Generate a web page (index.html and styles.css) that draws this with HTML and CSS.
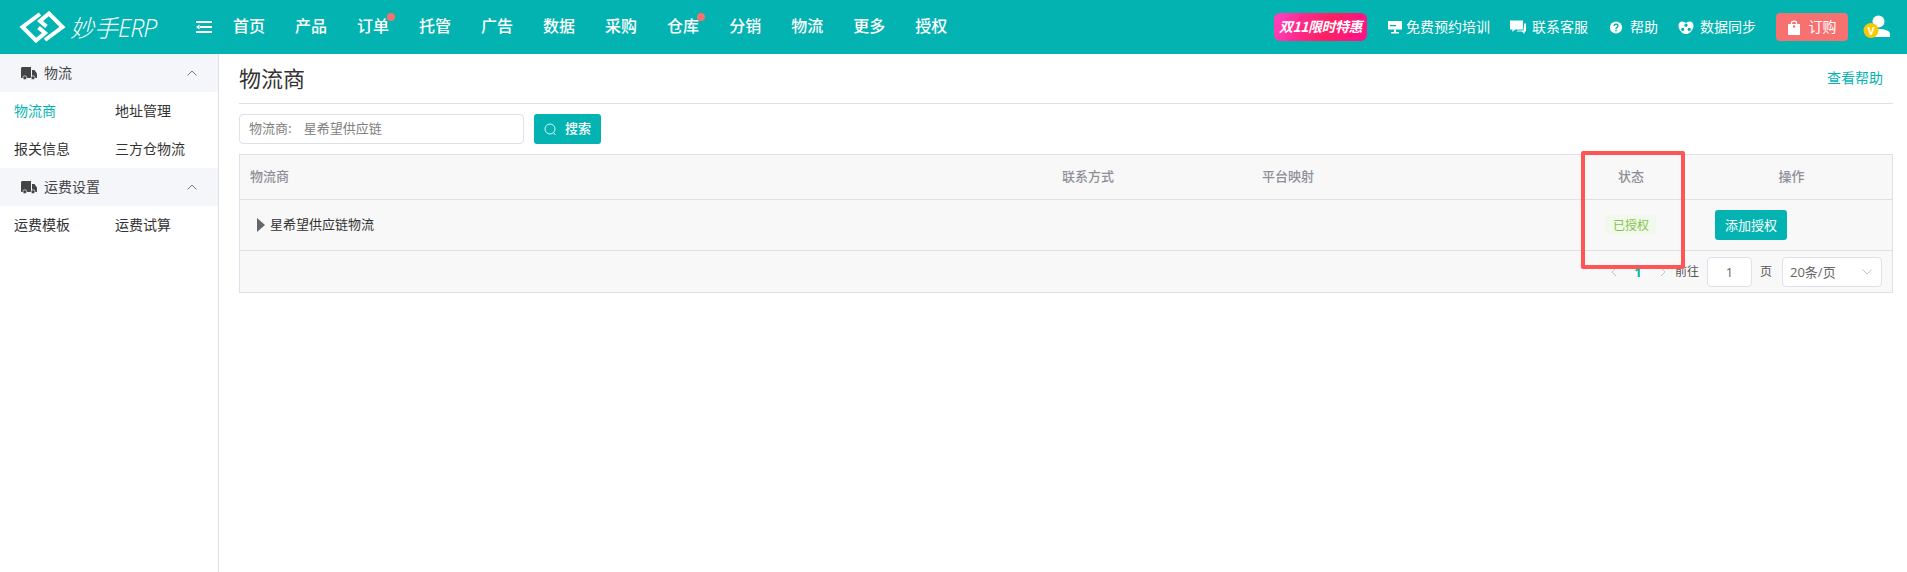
FILE: index.html
```html
<!DOCTYPE html>
<html lang="zh-CN">
<head>
<meta charset="utf-8">
<title>物流商</title>
<link rel="stylesheet" href="styles.css">
</head>
<body>
<header class="topbar">
  <div class="brand">
    <svg class="brand-mark" viewBox="0 0 47 32" fill="none" stroke="#fff" stroke-width="4">
      <path d="M21 3 3.500 16 17 29.500 26 22 19.500 16.500"/>
      <path d="M26 29 43.500 16 30 2.500 21 10 27.500 15.500"/>
    </svg>
    <span class="brand-name">妙手<span class="brand-latin">ERP</span></span>
  </div>
  <svg class="menu-toggle" viewBox="0 0 16 12" fill="#fff">
    <rect x="0" y="0" width="16" height="2"/>
    <rect x="4" y="5" width="12" height="2"/>
    <path d="M0 6 3.500 3.500V8.500Z"/>
    <rect x="0" y="10" width="16" height="2"/>
  </svg>
  <nav class="nav">
    <a class="nav-item">首页</a>
    <a class="nav-item">产品</a>
    <a class="nav-item has-dot">订单</a>
    <a class="nav-item">托管</a>
    <a class="nav-item">广告</a>
    <a class="nav-item">数据</a>
    <a class="nav-item">采购</a>
    <a class="nav-item has-dot">仓库</a>
    <a class="nav-item">分销</a>
    <a class="nav-item">物流</a>
    <a class="nav-item">更多</a>
    <a class="nav-item">授权</a>
  </nav>
  <div class="tools">
    <span class="promo">双11限时特惠</span>
    <a class="tool tool-first">
      <svg class="tool-icon-small" viewBox="0 0 14 14" fill="#fff"><path d="M0 1h14v8.500H0Z"/><path d="M6 9.500h2v2.500h3v1.500H3V12h3Z"/><rect x="2" y="5" width="6" height="1.300" fill="#03b3b2"/></svg>
      <span class="tool-label">免费预约培训</span>
    </a>
    <a class="tool">
      <svg class="tool-icon" viewBox="0 0 16 14" fill="#fff"><path d="M0 0h13v9H5L2.500 11.500V9H0Z"/><path d="M14.200 3H16v8h-1.500v2.500L12 11H6.500L7.500 10H13.500Z"/></svg>
      <span class="tool-label">联系客服</span>
    </a>
    <a class="tool">
      <svg class="tool-icon" viewBox="0 0 16 16"><circle cx="8" cy="8" r="6.500" fill="#fff"/><path d="M5.900 6.300C6 3.900 10.100 4 10.100 6.300 10.100 7.900 8 7.800 8 9.500" fill="none" stroke="#03b3b2" stroke-width="1.500"/><rect x="7.200" y="10.500" width="1.600" height="1.600" fill="#03b3b2"/></svg>
      <span class="tool-label">帮助</span>
    </a>
    <a class="tool">
      <svg class="tool-icon" viewBox="0 0 16 16"><path d="M4 1.500C5.600 1.500 7 2.300 8 3.200 9 2.300 10.400 1.500 12 1.500 14.500 1.500 16 3.700 16 6 16 10.500 11.500 15 8 15 4.500 15 0 10.500 0 6 0 3.700 1.500 1.500 4 1.500Z" fill="#fff"/><circle cx="8" cy="5.500" r="1.700" fill="#03b3b2"/><circle cx="4.500" cy="10" r="1.700" fill="#03b3b2"/><circle cx="11.500" cy="10" r="1.700" fill="#03b3b2"/></svg>
      <span class="tool-label">数据同步</span>
    </a>
    <a class="order-btn">
      <svg class="order-icon" viewBox="0 0 12 15"><path d="M0 4h12v11H0Z" fill="#fff"/><path d="M3.500 6V2.800C3.500 .6 8.500 .6 8.500 2.800V6" fill="none" stroke="#fff" stroke-width="1.300"/><circle cx="6" cy="6.500" r="1.200" fill="#f87171"/></svg>
      <span class="tool-label">订购</span>
    </a>
    <div class="user">
      <svg class="user-icon" viewBox="0 0 27 24"><circle cx="15.500" cy="6.500" r="6" fill="#fff"/><path d="M8 22V19C8 15 12 14 15.500 14 20 14 27 15 27 19V22Z" fill="#fff"/><circle cx="8" cy="15.500" r="7.500" fill="#fcc800"/></svg>
      <span class="vip">V</span>
    </div>
  </div>
</header>
<div class="shell">
  <aside class="sidebar">
    <div class="group-head">
      <svg class="truck" viewBox="0 0 16 13"><use href="#truck-shape"/></svg>
      <span class="group-title">物流</span>
      <svg class="chevron" viewBox="0 0 10 6"><path d="M.5 5.500 5 1 9.500 5.500"/></svg>
    </div>
    <div class="group-links">
      <a class="side-link is-active">物流商</a>
      <a class="side-link">地址管理</a>
      <a class="side-link">报关信息</a>
      <a class="side-link">三方仓物流</a>
    </div>
    <div class="group-head">
      <svg class="truck" viewBox="0 0 16 13"><use href="#truck-shape"/></svg>
      <span class="group-title">运费设置</span>
      <svg class="chevron" viewBox="0 0 10 6"><path d="M.5 5.500 5 1 9.500 5.500"/></svg>
    </div>
    <div class="group-links">
      <a class="side-link">运费模板</a>
      <a class="side-link">运费试算</a>
    </div>
  </aside>
  <main class="content">
    <div class="page-head">
      <h1 class="page-title">物流商</h1>
      <a class="help-link">查看帮助</a>
    </div>
    <div class="filters">
      <div class="field">
        <span class="field-label">物流商:</span>
        <span class="field-value">星希望供应链</span>
      </div>
      <button class="btn btn-search" type="button">
        <svg class="search-icon" viewBox="0 0 13 13"><circle cx="6" cy="6" r="5"/><path d="M9.500 9.800 11.500 12"/></svg>
        <span class="btn-label">搜索</span>
      </button>
    </div>
    <section class="table">
      <div class="row row-head">
        <div class="cell">物流商</div>
        <div class="cell">联系方式</div>
        <div class="cell">平台映射</div>
        <div class="cell cell-center">状态</div>
        <div class="cell cell-center">操作</div>
      </div>
      <div class="row row-body">
        <div class="cell cell-name"><span class="caret"></span><span class="name-text">星希望供应链物流</span></div>
        <div class="cell"></div>
        <div class="cell"></div>
        <div class="cell cell-center"><span class="tag">已授权</span></div>
        <div class="cell cell-action"><button class="btn btn-add" type="button">添加授权</button></div>
      </div>
      <div class="pager">
        <svg class="pager-arrow" viewBox="0 0 12 12"><path d="M8 2 4 6 8 10"/></svg>
        <span class="pager-num">1</span>
        <svg class="pager-arrow pager-next" viewBox="0 0 12 12"><path d="M4 2 8 6 4 10"/></svg>
        <span class="pager-text pager-goto">前往</span>
        <span class="pager-input">1</span>
        <span class="pager-text pager-unit">页</span>
        <div class="pager-select">
          <span>20条/页</span>
          <svg class="select-chevron" viewBox="0 0 10 6"><path d="M.5 .5 5 5 9.500 .5"/></svg>
        </div>
      </div>
    </section>
  </main>
</div>
<div class="highlight"></div>
<svg class="sprite" width="0" height="0">
  <defs>
    <g id="truck-shape">
      <path d="M0 1.500C0 .7.700 0 1.500 0H10V11H0Z" fill="#444"/>
      <path d="M11 3h2.500L16 6.500V11H11Z" fill="#444"/>
      <circle cx="3.800" cy="10.800" r="2" fill="#444" stroke="#f5f6fa" stroke-width=".7"/>
      <circle cx="12" cy="10.800" r="2" fill="#444" stroke="#f5f6fa" stroke-width=".7"/>
    </g>
  </defs>
</svg>
</body>
</html>
```

FILE: styles.css
```css
* {
  box-sizing: border-box;
}

html,
body {
  height: 100%;
}

body {
  margin: 0;
  display: flex;
  flex-direction: column;
  overflow: hidden;
  position: relative;
  background: #fff;
  color: #333;
  font-family: "Noto Sans CJK SC", "Open Sans", sans-serif;
  font-size: 13px;
}

.sprite {
  position: absolute;
}

/* top bar */
.topbar {
  flex: none;
  height: 54px;
  display: flex;
  align-items: center;
  padding: 0 17px 0 19px;
  background: #03b3b2;
  color: #fff;
}

.brand {
  width: 177px;
  display: flex;
  align-items: center;
  gap: 4px;
}

.brand-mark {
  width: 47px;
  height: 32px;
}

.brand-name {
  font-size: 24px;
  font-weight: 300;
  font-style: italic;
  line-height: 32px;
}

.brand-latin {
  font-family: "Open Sans", sans-serif;
  font-size: 25px;
  letter-spacing: -1px;
}

.menu-toggle {
  width: 16px;
  height: 12px;
  margin-right: 21px;
}

.nav {
  display: flex;
  gap: 30px;
}

.nav-item {
  position: relative;
  height: 54px;
  font-size: 16px;
  font-weight: 500;
  line-height: 50px;
}

.has-dot::after {
  content: "";
  position: absolute;
  top: 13px;
  right: -6px;
  width: 8px;
  height: 8px;
  border-radius: 50%;
  background: #f87171;
}

.tools {
  margin-left: auto;
  display: flex;
  align-items: center;
  gap: 20px;
}

.promo {
  width: 93px;
  height: 28px;
  border-radius: 6px;
  background: linear-gradient(110deg, #ff3eb5 8%, #ff2a8c 30%, #ff2060 58%, #ff1483 90%);
  font-size: 14px;
  font-weight: 700;
  font-style: italic;
  line-height: 27px;
  letter-spacing: -.5px;
  text-align: center;
  white-space: nowrap;
}

.tool {
  display: flex;
  align-items: center;
  gap: 6px;
  font-size: 14px;
  line-height: 20px;
}

.tool-label {
  padding-bottom: 2px;
}

.tool-first {
  gap: 4px;
  margin-left: 1px;
}

.tool-icon {
  width: 16px;
  height: 15px;
}

.tool-icon-small {
  width: 14px;
  height: 14px;
}

.order-btn {
  width: 72px;
  height: 28px;
  display: flex;
  align-items: center;
  justify-content: center;
  gap: 9px;
  border-radius: 4px;
  background: #f87171;
  font-size: 14px;
}

.order-icon {
  width: 12px;
  height: 15px;
}

.user {
  position: relative;
  width: 27px;
  height: 24px;
  margin-left: -5px;
}

.user-icon {
  display: block;
  width: 27px;
  height: 24px;
}

.vip {
  position: absolute;
  left: 0;
  top: 8px;
  width: 16px;
  font-family: "Open Sans", sans-serif;
  font-size: 11px;
  font-weight: 700;
  line-height: 15px;
  text-align: center;
}

/* shell */
.shell {
  flex: 1;
  min-height: 0;
  display: flex;
}

.sidebar {
  flex: none;
  width: 219px;
  border-right: 1px solid #e0e0ea;
}

.group-head {
  height: 38px;
  display: flex;
  align-items: center;
  padding: 0 21px;
  background: #f5f6fa;
}

.truck {
  width: 16px;
  height: 13px;
  margin-right: 7px;
}

.group-title {
  flex: 1;
  padding-bottom: 2px;
  font-size: 14px;
  line-height: 20px;
  color: #444;
}

.chevron {
  width: 10px;
  height: 6px;
  fill: none;
  stroke: #777;
}

.group-links {
  display: grid;
  grid-template-columns: 101px 101px;
  grid-auto-rows: 38px;
  padding-left: 14px;
}

.side-link {
  font-size: 14px;
  line-height: 36px;
  white-space: nowrap;
  color: #333;
}

.is-active {
  color: #03b3b2;
}

/* content */
.content {
  flex: 1;
  min-width: 0;
  padding: 0 14px 0 20px;
}

.page-head {
  height: 50px;
  display: flex;
  align-items: center;
  justify-content: space-between;
  padding: 0 10px 3px 0;
  border-bottom: 1px solid #e0e0ea;
}

.page-title {
  margin: 0;
  font-size: 22px;
  font-weight: 400;
  line-height: 44px;
  color: #333;
}

.help-link {
  font-size: 14px;
  line-height: 20px;
  color: #03b3b2;
}

.filters {
  display: flex;
  gap: 10px;
  margin-top: 10px;
}

.field {
  width: 285px;
  height: 30px;
  display: flex;
  align-items: center;
  gap: 12px;
  padding: 0 0 2px 9px;
  border: 1px solid #e0e0ea;
  border-radius: 4px;
  color: #808080;
  line-height: 20px;
}

.btn {
  height: 30px;
  display: flex;
  align-items: center;
  justify-content: center;
  border: 0;
  border-radius: 3px;
  background: #03b3b2;
  color: #fff;
  font-family: inherit;
  font-size: 13px;
  line-height: 20px;
}

.btn-label {
  padding-bottom: 2px;
}

.btn-search {
  width: 67px;
  gap: 8px;
  font-weight: 500;
}

.search-icon {
  width: 13px;
  height: 13px;
  fill: none;
  stroke: #d8f4f3;
}

.table {
  margin-top: 10px;
  border: 1px solid #e0e0ea;
  background: #f8f8f8;
}

.row {
  display: grid;
  grid-template-columns: 812px 200px 319px 120px 201px;
  align-items: center;
  border-bottom: 1px solid #e0e0ea;
}

.row-head {
  height: 45px;
  padding-bottom: 2px;
  color: #8f8f98;
  font-weight: 500;
}

.row-body {
  height: 51px;
  color: #333;
}

.cell {
  padding-left: 10px;
  line-height: 20px;
}

.cell-center {
  padding-left: 0;
  text-align: center;
}

.cell-name {
  display: flex;
  align-items: center;
  gap: 5px;
  padding-left: 17px;
}

.name-text {
  padding-bottom: 2px;
}

.caret {
  width: 0;
  height: 0;
  border-top: 7px solid transparent;
  border-bottom: 7px solid transparent;
  border-left: 8px solid #666;
}

.cell-action {
  padding-left: 24px;
}

.tag {
  display: inline-block;
  width: 50px;
  height: 20px;
  border-radius: 3px;
  background: #f0f9eb;
  color: #85c44a;
  font-size: 12px;
  line-height: 19px;
  text-align: center;
}

.btn-add {
  width: 72px;
}

.pager {
  height: 41px;
  display: flex;
  align-items: center;
  justify-content: flex-end;
  padding-right: 10px;
  font-size: 12px;
}

.pager-arrow {
  width: 12px;
  height: 12px;
  fill: none;
  stroke: #c0c4cc;
}

.pager-num {
  width: 12px;
  margin: 0 13px 0 12px;
  color: #03b3b2;
  font-family: "Open Sans", sans-serif;
  font-size: 13px;
  font-weight: 700;
  text-align: center;
}

.pager-next {
  margin-right: 6px;
}

.pager-text {
  padding-bottom: 2px;
  color: #555;
  line-height: 20px;
}

.pager-goto {
  margin-right: 8px;
}

.pager-unit {
  margin: 0 10px 0 8px;
}

.pager-input {
  width: 45px;
  height: 30px;
  border: 1px solid #e0e0ea;
  border-radius: 4px;
  background: #fff;
  color: #666;
  font-family: "Open Sans", sans-serif;
  font-size: 13px;
  line-height: 28px;
  text-align: center;
}

.pager-select {
  width: 100px;
  height: 30px;
  display: flex;
  align-items: center;
  justify-content: space-between;
  padding: 0 9px 0 7px;
  border: 1px solid #e0e0ea;
  border-radius: 4px;
  background: #fff;
  color: #666;
  font-family: "Open Sans", "Noto Sans CJK SC", sans-serif;
  font-size: 13px;
}

.select-chevron {
  width: 10px;
  height: 6px;
  fill: none;
  stroke: #c0c4cc;
}

/* red annotation drawn over the screenshot */
.highlight {
  position: absolute;
  left: 1581px;
  top: 151px;
  width: 104px;
  height: 118px;
  border: 4px solid #ff5555;
  border-radius: 2px;
}
```
